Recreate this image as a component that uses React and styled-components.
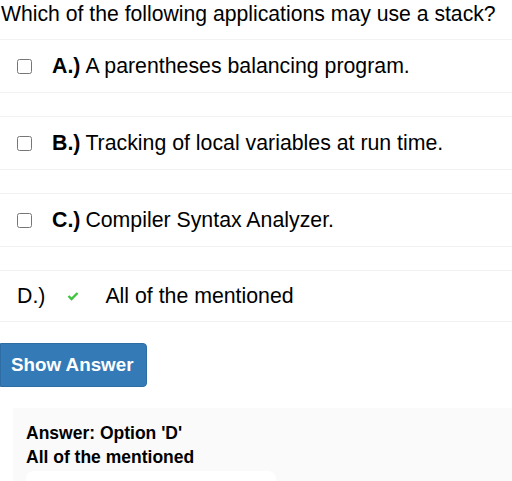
import React from 'react';
import styled, { createGlobalStyle } from 'styled-components';

const GlobalStyle = createGlobalStyle`
  html, body {
    margin: 0;
    padding: 0;
    background: #fff;
  }
  body {
    font-family: "Liberation Sans", Arial, sans-serif;
    color: #000;
  }
`;

const Page = styled.div`
  width: 512px;
  height: 481px;
  overflow: hidden;
`;

const Question = styled.div`
  font-size: 21.2px;
  line-height: 24px;
  padding: 2px 0 13px 1px;
  border-bottom: 1px solid #f2f2f2;
  white-space: nowrap;
`;

const OptionList = styled.div`
  display: flex;
  flex-direction: column;
`;

const Option = styled.label`
  display: flex;
  align-items: center;
  height: ${props => props.$height || 52}px;
  padding-left: 17px;
  border-top: ${props => (props.$noTop ? 'none' : '1px solid #f2f2f2')};
  border-bottom: 1px solid #f2f2f2;
  margin-top: ${props => props.$gap || 0}px;
  font-size: 21.3px;
  white-space: nowrap;
`;

const Check = styled.input`
  width: 15px;
  height: 15px;
  margin: 0 20px 0 0;
`;

const Letter = styled.span`
  font-weight: ${props => (props.$bold ? 700 : 400)};
  margin-right: ${props => props.$space || 5}px;
`;

const Tick = styled.svg`
  width: 12px;
  height: 10px;
  margin-right: 26px;
`;

const ShowButton = styled.button`
  display: block;
  margin-top: 21px;
  width: 147px;
  height: 44px;
  padding: 0 0 0 10px;
  text-align: left;
  background: #337ab7;
  color: #fff;
  border: 1px solid #2e6da4;
  border-radius: 0 4px 4px 0;
  font-family: "Liberation Sans", Arial, sans-serif;
  font-weight: 700;
  font-size: 18.8px;
  white-space: nowrap;
`;

const AnswerBox = styled.div`
  margin: 21px 0 0 13px;
  background: #fafafa;
  padding: 13px 13px 0;
  height: 80px;
`;

const AnswerLine = styled.div`
  font-weight: 700;
  font-size: 17.5px;
  line-height: 24px;
`;

const Inner = styled.div`
  margin-top: 2px;
  width: 250px;
  height: 30px;
  background: #fff;
  border-radius: 8px 8px 0 0;
`;

const options = [
  { letter: 'A.)', text: 'A parentheses balancing program.' },
  { letter: 'B.)', text: 'Tracking of local variables at run time.' },
  { letter: 'C.)', text: 'Compiler Syntax Analyzer.' },
];

export default function App() {
  return (
    <Page>
      <GlobalStyle />
      <Question>Which of the following applications may use a stack?</Question>
      <OptionList>
        {options.map((o, i) => (
          <Option key={o.letter} $noTop={i === 0} $gap={i === 0 ? 0 : 23}>
            <Check type="checkbox" />
            <Letter $bold>{o.letter}</Letter>
            {o.text}
          </Option>
        ))}
        <Option $gap={23} $height={50}>
          <Letter $space={22}>D.)</Letter>
          <Tick viewBox="0 0 12 10">
            <polyline points="1.5,5 4.5,8 10.5,2" fill="none" stroke="#3ec43e" strokeWidth="2.4" />
          </Tick>
          All of the mentioned
        </Option>
      </OptionList>
      <ShowButton>Show Answer</ShowButton>
      <AnswerBox>
        <AnswerLine>Answer: Option 'D'</AnswerLine>
        <AnswerLine>All of the mentioned</AnswerLine>
        <Inner />
      </AnswerBox>
    </Page>
  );
}
